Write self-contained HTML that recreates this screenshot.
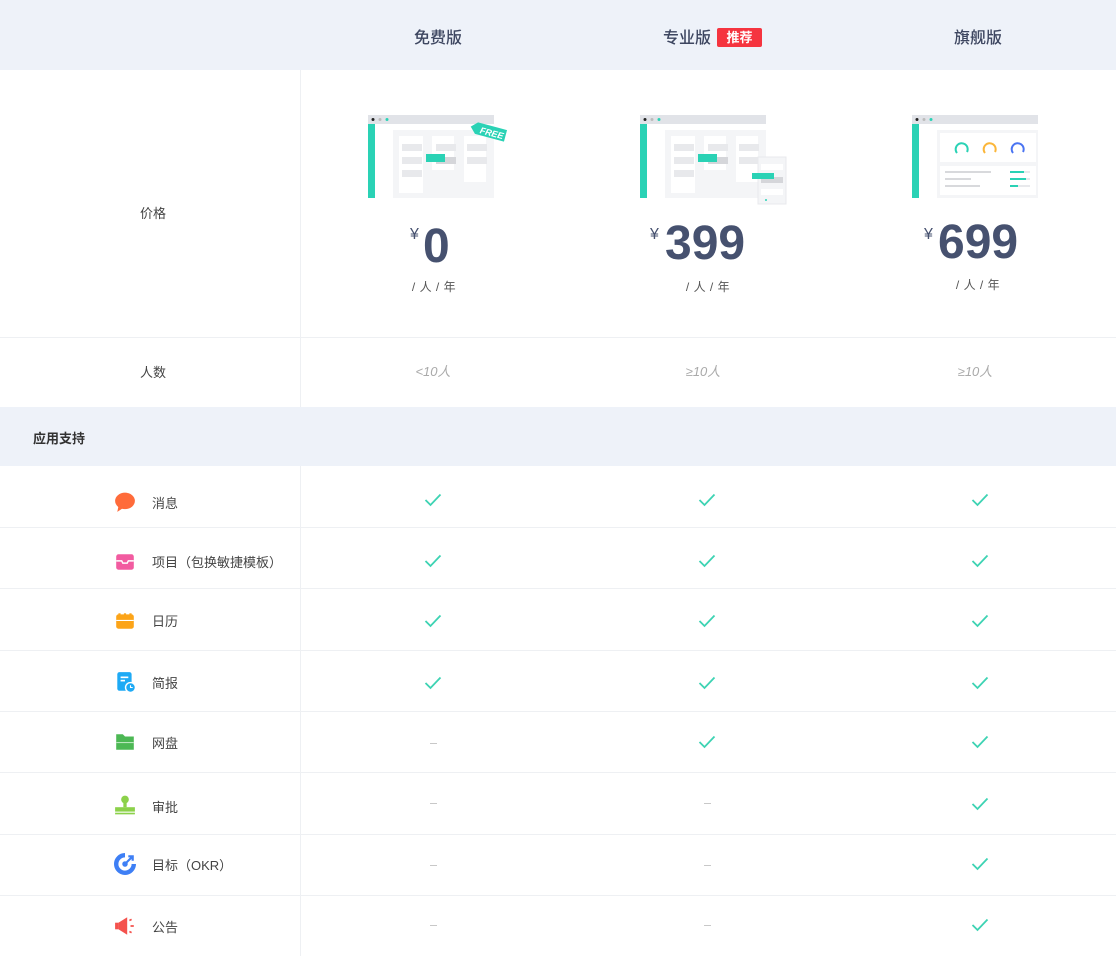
<!DOCTYPE html>
<html><head><meta charset="utf-8"><style>
*{margin:0;padding:0;box-sizing:border-box}
body{width:1116px;height:956px;background:#fff;font-family:"Liberation Sans","Noto Sans CJK SC",sans-serif;position:relative;overflow:hidden;color:#333}
.a{position:absolute}
.bg{background:#eef2f9}
.h{position:absolute;left:0;width:1116px;height:1px;background:#eef0f3}
.c{position:absolute;transform:translateX(-50%);white-space:nowrap}
.hd{font-size:16px;color:#3d4660;top:24px;font-weight:500}
.lbl{font-size:13px;color:#444;position:absolute;left:152px}
.ico{position:absolute;left:114px;width:22px;height:22px}
.price{font-weight:bold;color:#46516f;font-size:48px;line-height:48px}
.yen{font-size:16px;color:#46516f}
.unit{font-size:12px;color:#555;letter-spacing:0.5px}
.ppl{font-size:13px;color:#aaa;font-style:italic;top:361px}
</style></head><body>
<div class="a bg" style="left:0;top:0;width:1116px;height:70px"></div>
<div class="a bg" style="left:0;top:407px;width:1116px;height:59px"></div>
<div class="a" style="left:300px;top:70px;width:1px;height:337px;background:#eef0f3"></div>
<div class="a" style="left:300px;top:466px;width:1px;height:490px;background:#eef0f3"></div>
<div class="h" style="top:337px"></div>

<div class="c hd" style="left:438px">免费版</div>
<div class="c hd" style="left:687px">专业版</div>
<div class="a" style="left:717px;top:28px;width:45px;height:19px;background:#f5343f;color:#fff;font-size:13px;line-height:19px;text-align:center;border-radius:2px;font-weight:bold">推荐</div>
<div class="c hd" style="left:978px">旗舰版</div>

<div class="c" style="left:153px;top:203px;font-size:13px;color:#444">价格</div>
<div class="c" style="left:153px;top:362px;font-size:13px;color:#444">人数</div>
<div class="a" style="left:33px;top:428px;font-size:13px;color:#333;font-weight:bold">应用支持</div>

<svg class="a" style="left:366px;top:112px" width="150" height="90">
<rect x="2" y="3" width="126" height="9" fill="#e1e3e8"/><circle cx="7" cy="7.5" r="1.5" fill="#222"/><circle cx="14" cy="7.5" r="1.5" fill="#bbb"/><circle cx="21" cy="7.5" r="1.5" fill="#2ad2b5"/>
<rect x="2" y="12" width="7" height="74" fill="#2ad2b5"/>
<rect x="27" y="12" width="101" height="74" fill="#f4f5f7"/><rect x="27" y="12" width="101" height="6" fill="#fff"/>
<rect x="33" y="24" width="24" height="57" fill="#fff"/><rect x="66" y="24" width="22" height="34" fill="#fff"/><rect x="98" y="24" width="22" height="46" fill="#fff"/>
<rect x="36" y="32" width="20" height="7" fill="#e8e9ec"/><rect x="36" y="45" width="20" height="7" fill="#e8e9ec"/><rect x="36" y="58" width="20" height="7" fill="#e8e9ec"/>
<rect x="70" y="32" width="20" height="7" fill="#e8e9ec"/><rect x="70" y="45" width="20" height="7" fill="#d5d6da"/><rect x="60" y="42" width="19" height="8" fill="#2ad2b5"/>
<rect x="101" y="32" width="20" height="7" fill="#e8e9ec"/><rect x="101" y="45" width="20" height="7" fill="#e8e9ec"/>
<g transform="rotate(15 125 20)"><path d="M110 14 L140 14 L140 26 L110 26 L104 20 Z" fill="#2ad2b5"/><text x="114" y="24" font-size="9" font-weight="bold" fill="#fff" font-style="italic" font-family="Liberation Sans">FREE</text></g>
</svg>
<svg class="a" style="left:638px;top:112px" width="152" height="95">
<rect x="2" y="3" width="126" height="9" fill="#e1e3e8"/><circle cx="7" cy="7.5" r="1.5" fill="#222"/><circle cx="14" cy="7.5" r="1.5" fill="#bbb"/><circle cx="21" cy="7.5" r="1.5" fill="#2ad2b5"/>
<rect x="2" y="12" width="7" height="74" fill="#2ad2b5"/>
<rect x="27" y="12" width="101" height="74" fill="#f4f5f7"/><rect x="27" y="12" width="101" height="6" fill="#fff"/>
<rect x="33" y="24" width="24" height="57" fill="#fff"/><rect x="66" y="24" width="22" height="34" fill="#fff"/><rect x="98" y="24" width="22" height="46" fill="#fff"/>
<rect x="36" y="32" width="20" height="7" fill="#e8e9ec"/><rect x="36" y="45" width="20" height="7" fill="#e8e9ec"/><rect x="36" y="58" width="20" height="7" fill="#e8e9ec"/>
<rect x="70" y="32" width="20" height="7" fill="#e8e9ec"/><rect x="70" y="45" width="20" height="7" fill="#d5d6da"/><rect x="60" y="42" width="19" height="8" fill="#2ad2b5"/>
<rect x="101" y="32" width="20" height="7" fill="#e8e9ec"/><rect x="101" y="45" width="20" height="7" fill="#e8e9ec"/>
<rect x="120" y="45" width="28" height="47" fill="#f4f5f7" stroke="#e8e9ec"/><rect x="123" y="52" width="22" height="6" fill="#fff"/><rect x="123" y="65" width="22" height="6" fill="#d5d6da"/><rect x="114" y="61" width="22" height="6" fill="#2ad2b5"/><rect x="123" y="77" width="22" height="6" fill="#fff"/><circle cx="128" cy="88" r="1" fill="#2ad2b5"/>
</svg>
<svg class="a" style="left:910px;top:112px" width="135" height="90">
<rect x="2" y="3" width="126" height="9" fill="#e1e3e8"/><circle cx="7" cy="7.5" r="1.5" fill="#222"/><circle cx="14" cy="7.5" r="1.5" fill="#bbb"/><circle cx="21" cy="7.5" r="1.5" fill="#2ad2b5"/>
<rect x="2" y="12" width="7" height="74" fill="#2ad2b5"/>
<rect x="27" y="12" width="101" height="74" fill="#f4f5f7"/><rect x="27" y="12" width="101" height="6" fill="#fff"/>
<rect x="30" y="21" width="96" height="29" fill="#fff"/><rect x="30" y="54" width="96" height="29" fill="#fff"/>
<path d="M47 41 A6 6 0 1 1 57 40" fill="none" stroke="#2ad2b5" stroke-width="2"/>
<path d="M75 41 A6 6 0 1 1 85 40" fill="none" stroke="#fbb63a" stroke-width="2"/>
<path d="M103 41 A6 6 0 1 1 113 40" fill="none" stroke="#4a74f2" stroke-width="2"/>
<rect x="35" y="59" width="46" height="2" fill="#d8d9dc"/><rect x="35" y="66" width="26" height="2" fill="#d8d9dc"/><rect x="35" y="73" width="35" height="2" fill="#d8d9dc"/>
<rect x="100" y="59" width="20" height="2" fill="#e8e9ec"/><rect x="100" y="59" width="14" height="2" fill="#2ad2b5"/>
<rect x="100" y="66" width="20" height="2" fill="#e8e9ec"/><rect x="100" y="66" width="16" height="2" fill="#2ad2b5"/>
<rect x="100" y="73" width="20" height="2" fill="#e8e9ec"/><rect x="100" y="73" width="8" height="2" fill="#2ad2b5"/>
</svg>

<div class="a yen" style="left:410px;top:226px">¥</div><div class="a price" style="left:423px;top:223px">0</div>
<div class="c unit" style="left:434px;top:278px">/ 人 / 年</div>
<div class="a yen" style="left:650px;top:226px">¥</div><div class="a price" style="left:665px;top:220px">399</div>
<div class="c unit" style="left:708px;top:278px">/ 人 / 年</div>
<div class="a yen" style="left:924px;top:226px">¥</div><div class="a price" style="left:938px;top:219px">699</div>
<div class="c unit" style="left:978px;top:276px">/ 人 / 年</div>

<div class="c ppl" style="left:433px">&lt;10人</div>
<div class="c ppl" style="left:703px">≥10人</div>
<div class="c ppl" style="left:975px">≥10人</div>

<div class="h" style="top:527px"></div><div class="h" style="top:588px"></div><div class="h" style="top:650px"></div><div class="h" style="top:711px"></div><div class="h" style="top:772px"></div><div class="h" style="top:834px"></div><div class="h" style="top:895px"></div>

<svg class="ico" style="top:491px" viewBox="0 0 20 20"><ellipse cx="10" cy="9" rx="9" ry="7.5" fill="#ff6b3a"/><path d="M4 14 L3 19 L9 15Z" fill="#ff6b3a"/></svg>
<div class="lbl" style="top:493px">消息</div>
<svg class="ico" style="top:551px" viewBox="0 0 20 20"><rect x="2" y="3" width="16" height="14" rx="2" fill="#f25ba0"/><path d="M2 9 H7 L8 11 H12 L13 9 H18" stroke="#fff" stroke-width="1.3" fill="none"/></svg>
<div class="lbl" style="top:552px">项目（包换敏捷模板）</div>
<svg class="ico" style="top:610px" viewBox="0 0 20 20"><rect x="2" y="4" width="16" height="13" rx="2" fill="#fca418"/><rect x="4" y="3" width="2" height="4" fill="#fca418"/><rect x="9" y="3" width="2" height="4" fill="#fca418"/><rect x="14" y="3" width="2" height="4" fill="#fca418"/><rect x="2" y="9" width="16" height="1" fill="#fff"/></svg>
<div class="lbl" style="top:611px">日历</div>
<svg class="ico" style="top:671px" viewBox="0 0 20 20"><rect x="3" y="1" width="13" height="17" rx="2" fill="#1eaaf5"/><rect x="6" y="5" width="7" height="1.5" fill="#fff"/><rect x="6" y="8" width="4" height="1.5" fill="#fff"/><circle cx="15" cy="15" r="4.5" fill="#1eaaf5" stroke="#fff" stroke-width="1.3"/><path d="M15 13 V15 H17" stroke="#fff" stroke-width="1" fill="none"/></svg>
<div class="lbl" style="top:673px">简报</div>
<svg class="ico" style="top:731px" viewBox="0 0 20 20"><path d="M2 3 H8 L10 5 H18 V17 H2Z" fill="#4cb854"/><rect x="2" y="10" width="16" height="1" fill="#b9e6bc"/></svg>
<div class="lbl" style="top:733px">网盘</div>
<svg class="ico" style="top:794px" viewBox="0 0 20 20"><circle cx="10" cy="5" r="3.5" fill="#8cd14a"/><rect x="8.5" y="7" width="3" height="5" fill="#8cd14a"/><rect x="1" y="12" width="18" height="4" fill="#8cd14a"/><rect x="1" y="17" width="18" height="1.5" fill="#8cd14a"/></svg>
<div class="lbl" style="top:797px">审批</div>
<svg class="ico" style="top:853px" viewBox="0 0 20 20"><path d="M10 2 A8 8 0 1 0 18 10" fill="none" stroke="#3e7ff5" stroke-width="4"/><circle cx="10" cy="10" r="2.5" fill="#3e7ff5"/><path d="M10 10 L16 4 M13 3 L17 3 L17 7" stroke="#3e7ff5" stroke-width="2" fill="none"/></svg>
<div class="lbl" style="top:855px">目标（OKR）</div>
<svg class="ico" style="top:915px" viewBox="0 0 20 20"><rect x="1" y="7" width="3" height="6" fill="#f4524d"/><path d="M4 7 L12 2 V18 L4 13Z" fill="#f4524d"/><path d="M14 5 L16 4 M15 10 H18 M14 15 L16 16" stroke="#f4524d" stroke-width="1.5"/></svg>
<div class="lbl" style="top:917px">公告</div>

<svg width="0" height="0" style="position:absolute"><defs><symbol id="ck" viewBox="0 0 18 14"><path d="M1.5 7 L6.5 12 L16.5 1.5" fill="none" stroke="#3dd3b3" stroke-width="1.8"/></symbol></defs></svg>
<svg class="a" style="left:0;top:0" width="1116" height="956">
<g>
<use href="#ck" x="424" y="493" width="18" height="14"/><use href="#ck" x="698" y="493" width="18" height="14"/><use href="#ck" x="971" y="493" width="18" height="14"/>
<use href="#ck" x="424" y="554" width="18" height="14"/><use href="#ck" x="698" y="554" width="18" height="14"/><use href="#ck" x="971" y="554" width="18" height="14"/>
<use href="#ck" x="424" y="614" width="18" height="14"/><use href="#ck" x="698" y="614" width="18" height="14"/><use href="#ck" x="971" y="614" width="18" height="14"/>
<use href="#ck" x="424" y="676" width="18" height="14"/><use href="#ck" x="698" y="676" width="18" height="14"/><use href="#ck" x="971" y="676" width="18" height="14"/>
<use href="#ck" x="698" y="735" width="18" height="14"/><use href="#ck" x="971" y="735" width="18" height="14"/>
<use href="#ck" x="971" y="797" width="18" height="14"/>
<use href="#ck" x="971" y="857" width="18" height="14"/>
<use href="#ck" x="971" y="918" width="18" height="14"/>
</g>
<g fill="#c8c8c8">
<rect x="430" y="743" width="7" height="1"/>
<rect x="430" y="803" width="7" height="1"/><rect x="704" y="803" width="7" height="1"/>
<rect x="430" y="865" width="7" height="1"/><rect x="704" y="865" width="7" height="1"/>
<rect x="430" y="925" width="7" height="1"/><rect x="704" y="925" width="7" height="1"/>
</g>
</svg>
</body></html>
